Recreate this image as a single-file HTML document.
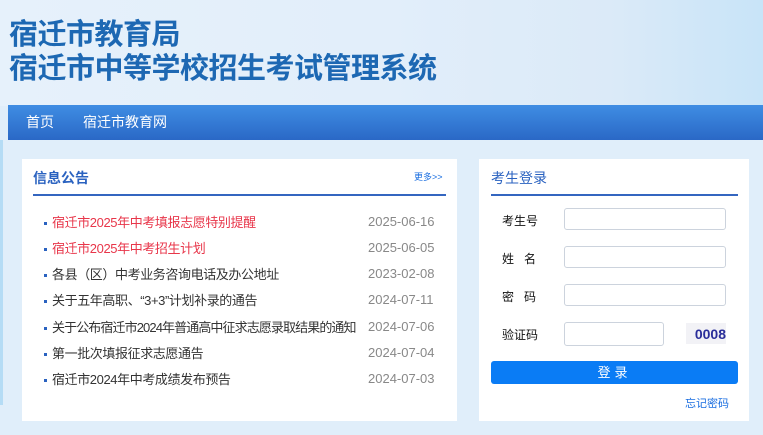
<!DOCTYPE html>
<html><head><meta charset="utf-8"><style>
*{margin:0;padding:0;box-sizing:border-box}
body{width:763px;height:435px;overflow:hidden;background:#e0eefa;font-family:"Liberation Sans","Noto Sans CJK SC",sans-serif;position:relative}
.hdr{position:absolute;left:0;top:0;width:763px;height:106px;background:linear-gradient(90deg,#e6f1fb 0%,#e2eefa 50%,#dbeaf8 80%,#c8e4f8 100%)}
.t{position:absolute;left:9px;font-weight:bold;color:#1d68b3;font-size:29px;letter-spacing:-0.5px;white-space:nowrap;line-height:1}
.nav{position:absolute;left:8px;top:105px;width:755px;height:35px;background:linear-gradient(#3f8de3,#2a68c6);}
.nav span{position:absolute;top:9px;color:#fff;font-size:14px;line-height:17px}
.strip{position:absolute;left:0;top:140px;width:3px;height:265px;background:#b5dcf5}
.p{position:absolute;background:#fff;top:159px;height:262px}
.h{position:absolute;font-size:14px;font-weight:bold;color:#2a62c0;line-height:18px}
.line{position:absolute;height:2px;background:#3466c0}
.row{position:absolute;left:44px;font-size:13px;color:#333;white-space:nowrap;line-height:16px;letter-spacing:-0.4px;margin-top:2px}
.row:before{content:"";position:absolute;left:0;top:7px;width:3px;height:3px;background:#2a62c0}
.row span{padding-left:8px}
.d{position:absolute;left:368px;font-size:13px;color:#888;line-height:16px;margin-top:1px}
.red{color:#e8364a!important}
.lb{position:absolute;left:502px;font-size:12px;color:#111;line-height:15px;margin-top:2px}
.in{position:absolute;left:564px;width:162px;height:22px;border:1px solid #ccd3dd;border-radius:3px;background:#fff}
</style></head><body>
<div class="hdr"></div>
<div class="t" style="top:21px">宿迁市教育局</div>
<div class="t" style="top:55px">宿迁市中等学校招生考试管理系统</div>
<div class="nav"><span style="left:18px">首页</span><span style="left:75px">宿迁市教育网</span></div>
<div class="strip"></div>
<div class="p" style="left:22px;width:435px"></div>
<div class="h" style="left:33px;top:169px">信息公告</div>
<div style="position:absolute;left:414px;top:172px;font-size:9px;color:#1a6ee0;line-height:11px">更多&gt;&gt;</div>
<div class="line" style="left:33px;top:194px;width:413px;height:1.5px"></div>
<div class="row red" style="top:213px"><span>宿迁市2025年中考填报志愿特别提醒</span></div><div class="d" style="top:213px">2025-06-16</div>
<div class="row red" style="top:239px"><span>宿迁市2025年中考招生计划</span></div><div class="d" style="top:239px">2025-06-05</div>
<div class="row" style="top:265px"><span>各县（区）中考业务咨询电话及办公地址</span></div><div class="d" style="top:265px">2023-02-08</div>
<div class="row" style="top:291px"><span>关于五年高职、“3+3”计划补录的通告</span></div><div class="d" style="top:291px">2024-07-11</div>
<div class="row" style="top:318px;letter-spacing:-0.9px"><span>关于公布宿迁市2024年普通高中征求志愿录取结果的通知</span></div><div class="d" style="top:318px">2024-07-06</div>
<div class="row" style="top:344px"><span>第一批次填报征求志愿通告</span></div><div class="d" style="top:344px">2024-07-04</div>
<div class="row" style="top:370px"><span>宿迁市2024年中考成绩发布预告</span></div><div class="d" style="top:370px">2024-07-03</div>

<div class="p" style="left:479px;width:270px"></div>
<div class="h" style="left:491px;top:169px;font-weight:normal;color:#2a62c0">考生登录</div>
<div class="line" style="left:491px;top:194px;width:247px;height:1.5px"></div>
<div class="lb" style="top:212px">考生号</div><div class="in" style="top:208px"></div>
<div class="lb" style="top:250px">姓&nbsp;&nbsp;&nbsp;名</div><div class="in" style="top:246px"></div>
<div class="lb" style="top:288px">密&nbsp;&nbsp;&nbsp;码</div><div class="in" style="top:284px"></div>
<div class="lb" style="top:326px">验证码</div><div class="in" style="top:322px;width:100px;height:24px"></div>
<div style="position:absolute;left:686px;top:323px;width:40px;height:21px;background:#f2f2f6;color:#2a2e9a;font-weight:bold;font-size:14px;text-align:right;padding-top:3px;line-height:16px">0008</div>
<div style="position:absolute;left:491px;top:361px;width:247px;height:23px;background:#0a7cf5;border-radius:3px;color:#fff;font-size:13px;text-align:center;line-height:23px;letter-spacing:4px">登录</div>
<div style="position:absolute;left:685px;top:398px;font-size:11px;color:#1a6ee0;line-height:13px">忘记密码</div>
</body></html>
